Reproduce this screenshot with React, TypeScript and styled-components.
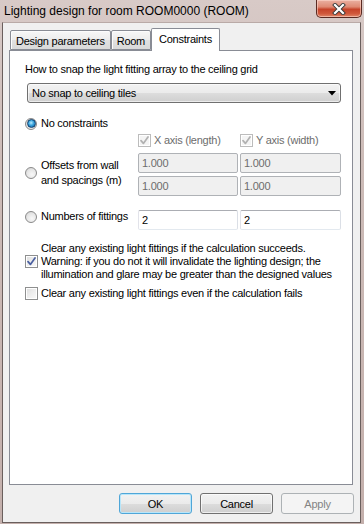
import React from "react";
import styled, { createGlobalStyle } from "styled-components";

const Global = createGlobalStyle`
  html, body { margin: 0; padding: 0; width: 364px; height: 524px; overflow: hidden; background: #c9b8b4; }
  #root { width: 364px; height: 524px; }
  * { box-sizing: border-box; }
`;

const UI_FONT = `"Liberation Sans", Arial, sans-serif`;

const Window = styled.div`
  width: 364px;
  height: 524px;
  display: flex;
  flex-direction: column;
  padding: 0 3px 1px 2px;
  background: linear-gradient(180deg, #d8cac7 0%, #cdbcb8 30%, #c4b0ac 100%);
  font-family: ${UI_FONT};
  font-size: 11px;
  letter-spacing: -0.25px;
  color: #000;
`;

const TitleBar = styled.div`
  height: 22px;
  flex: none;
  display: flex;
  align-items: flex-start;
`;

const Title = styled.div`
  padding: 4px 0 0 2px;
  font-size: 12px;
  letter-spacing: 0;
  line-height: 15px;
  color: #000;
`;

const CloseButton = styled.div`
  margin-left: auto;
  margin-right: -1px;
  width: 46px;
  height: 18px;
  border: 1px solid #5a2a22;
  border-top: none;
  border-radius: 0 0 5px 5px;
  background: linear-gradient(180deg, #eab0a2 0%, #df8a74 40%, #c6432a 55%, #d0583b 80%, #e0876a 100%);
  box-shadow: inset 0 0 0 1px rgba(255, 220, 210, 0.55);
  display: flex;
  align-items: center;
  justify-content: center;
`;

const Client = styled.div`
  flex: 1;
  display: flex;
  flex-direction: column;
  border: 1px solid #6a5f5d;
  border-top-color: #b9aaa7;
  background: #f0f0f0;
  padding: 5px 7px 8px 6px;
`;

const TabArea = styled.div`
  flex: 1;
  display: flex;
  flex-direction: column;
`;

const TabStrip = styled.div`
  height: 23px;
  display: flex;
  align-items: flex-end;
  padding-left: 1px;
  margin-bottom: -1px;
  position: relative;
  z-index: 1;
`;

const Tab = styled.div<{ $active?: boolean }>`
  display: flex;
  align-items: center;
  justify-content: center;
  border: 1px solid #898c95;
  border-bottom: ${(p) => (p.$active ? "none" : "1px solid #898c95")};
  border-radius: 2px 2px 0 0;
  height: ${(p) => (p.$active ? "23px" : "20px")};
  padding: ${(p) => (p.$active ? "0 7px 2px 7px" : "1px 5px 0 5px")};
  margin-bottom: ${(p) => (p.$active ? "0" : "1px")};
  background: ${(p) =>
    p.$active
      ? "#ffffff"
      : "linear-gradient(180deg, #f7f7f7 0%, #ececec 50%, #e1e1e1 51%, #d9d9d9 100%)"};
  box-shadow: ${(p) => (p.$active ? "none" : "inset 1px 1px 0 #fcfcfc")};
  white-space: nowrap;
`;

const Panel = styled.div`
  flex: 1;
  background: #ffffff;
  border: 1px solid #898c95;
  padding: 11px 10px 0 15px;
  display: flex;
  flex-direction: column;
`;

const TextLine = styled.div`
  line-height: 15px;
  white-space: nowrap;
`;

const Combo = styled.div`
  margin: 6px 1px 0 2px;
  height: 20px;
  border: 1px solid #707070;
  border-radius: 3px;
  background: linear-gradient(180deg, #f2f2f2 0%, #ebebeb 50%, #dddddd 51%, #cfcfcf 100%);
  box-shadow: inset 0 0 0 1px rgba(255, 255, 255, 0.6);
  display: flex;
  align-items: center;
  padding: 0 4px 0 4px;
`;

const ComboText = styled.span`
  flex: 1;
  white-space: nowrap;
`;

const Row = styled.div<{ $top: number; $align?: string }>`
  display: flex;
  align-items: ${(p) => p.$align ?? "center"};
  margin-top: ${(p) => p.$top}px;
`;

const LabelCell = styled.div<{ $offset?: number }>`
  width: 113px;
  flex: none;
  margin-top: ${(p) => p.$offset ?? 0}px;
`;

const Fields = styled.div`
  display: grid;
  grid-template-columns: 100px 101px;
  column-gap: 2px;
  row-gap: 3px;
  align-items: center;
`;

const OptionLabel = styled.label<{ $gap?: number; $disabled?: boolean }>`
  display: flex;
  align-items: center;
  gap: ${(p) => p.$gap ?? 4}px;
  color: ${(p) => (p.$disabled ? "#6d6d6d" : "#000")};
  line-height: 15px;
  white-space: nowrap;
`;

const MultiText = styled.span<{ $lh?: number }>`
  display: block;
  line-height: ${(p) => p.$lh ?? 15}px;
  white-space: nowrap;
`;

const RadioDot = styled.span<{ $checked?: boolean }>`
  width: 12px;
  height: 12px;
  flex: none;
  border-radius: 50%;
  border: 1px solid #8a8a8a;
  background: radial-gradient(circle at 60% 65%, #f8f8f8 0%, #e6e6e6 55%, #cdcdcd 100%);
  display: flex;
  align-items: center;
  justify-content: center;
  &::after {
    content: "";
    display: ${(p) => (p.$checked ? "block" : "none")};
    width: 7px;
    height: 7px;
    border-radius: 50%;
    border: 1px solid #10406e;
    background: radial-gradient(circle at 45% 40%, #b8ecff 0%, #39a3dd 45%, #0c5494 100%);
  }
`;

const CheckBox = styled.span<{ $disabled?: boolean }>`
  width: 13px;
  height: 13px;
  flex: none;
  border: 1px solid ${(p) => (p.$disabled ? "#bcbcbc" : "#8e8f8f")};
  background: ${(p) =>
    p.$disabled
      ? "#f4f4f4"
      : "linear-gradient(135deg, #dcdcdc 0%, #ececec 45%, #fafafa 100%)"};
  box-shadow: inset 0 0 0 1px #ffffff;
  display: flex;
  align-items: center;
  justify-content: center;
`;

const Input = styled.input<{ $disabled?: boolean }>`
  width: 100%;
  height: 20px;
  margin: 0;
  border: 1px solid #abadb3;
  border-color: #abadb3 #dbdfe6 #e3e9ef #e2e3ea;
  border-radius: 2px;
  padding: 0 3px;
  font-family: ${UI_FONT};
  font-size: 11px;
  letter-spacing: -0.25px;
  outline: none;
  background: ${(p) => (p.$disabled ? "#f0f0f0" : "#ffffff")};
  color: ${(p) => (p.$disabled ? "#6d6d6d" : "#000")};
  ${(p) => (p.$disabled ? "border-color: #afb2b6;" : "")}
`;

const ButtonRow = styled.div`
  margin-top: 8px;
  margin-right: -1px;
  display: flex;
  justify-content: flex-end;
  gap: 8px;
`;

const Button = styled.button<{ $default?: boolean }>`
  width: 73px;
  height: 21px;
  margin: 0;
  padding: 0;
  border: 1px solid ${(p) => (p.$default ? "#4fa6d8" : "#707070")};
  border-radius: 3px;
  background: linear-gradient(180deg, #f2f2f2 0%, #ebebeb 50%, #dddddd 51%, #cfcfcf 100%);
  box-shadow: inset 0 0 0 1px ${(p) => (p.$default ? "#b8e6fa" : "rgba(255,255,255,0.65)")};
  font-family: ${UI_FONT};
  font-size: 11px;
  letter-spacing: -0.25px;
  color: #000;
  &:disabled {
    border-color: #adb2b5;
    background: #f4f4f4;
    box-shadow: none;
    color: #838383;
  }
`;

const Check = ({ disabled }: { disabled?: boolean }) => (
  <svg width="9" height="9" viewBox="0 0 9 9">
    <path
      d="M1 4.6 L3.4 7.4 L8 1"
      fill="none"
      stroke={disabled ? "#b1b1b1" : "#4a5fa0"}
      strokeWidth="1.7"
      strokeLinecap="round"
      strokeLinejoin="round"
    />
  </svg>
);

export default function App() {
  return (
    <>
      <Global />
      <Window>
        <TitleBar>
          <Title>Lighting design for room ROOM0000 (ROOM)</Title>
          <CloseButton>
            <svg width="14" height="12" viewBox="0 0 14 12">
              <path d="M3 2 L11 10 M11 2 L3 10" stroke="#3a3a3a" strokeWidth="4" strokeLinecap="square" />
              <path d="M3 2 L11 10 M11 2 L3 10" stroke="#ffffff" strokeWidth="2.2" strokeLinecap="square" />
            </svg>
          </CloseButton>
        </TitleBar>
        <Client>
          <TabArea>
            <TabStrip>
              <Tab>Design parameters</Tab>
              <Tab>Room</Tab>
              <Tab $active>Constraints</Tab>
            </TabStrip>
            <Panel>
              <TextLine>How to snap the light fitting array to the ceiling grid</TextLine>
              <Combo>
                <ComboText>No snap to ceiling tiles</ComboText>
                <svg width="8" height="5" viewBox="0 0 8 5">
                  <path d="M0 0 L8 0 L4 4.5 Z" fill="#000" />
                </svg>
              </Combo>

              <Row $top={13}>
                <OptionLabel>
                  <RadioDot $checked />
                  <span>No constraints</span>
                </OptionLabel>
              </Row>

              <Row $top={2}>
                <LabelCell />
                <Fields>
                  <OptionLabel $gap={3} $disabled>
                    <CheckBox $disabled>
                      <Check disabled />
                    </CheckBox>
                    <span>X axis (length)</span>
                  </OptionLabel>
                  <OptionLabel $gap={3} $disabled>
                    <CheckBox $disabled>
                      <Check disabled />
                    </CheckBox>
                    <span>Y axis (width)</span>
                  </OptionLabel>
                </Fields>
              </Row>

              <Row $top={5} $align="flex-start">
                <LabelCell $offset={5}>
                  <OptionLabel>
                    <RadioDot />
                    <MultiText>
                      Offsets from wall
                      <br />
                      and spacings (m)
                    </MultiText>
                  </OptionLabel>
                </LabelCell>
                <Fields>
                  <Input $disabled disabled readOnly value="1.000" />
                  <Input $disabled disabled readOnly value="1.000" />
                  <Input $disabled disabled readOnly value="1.000" />
                  <Input $disabled disabled readOnly value="1.000" />
                </Fields>
              </Row>

              <Row $top={14} $align="flex-start">
                <LabelCell $offset={-1}>
                  <OptionLabel>
                    <RadioDot />
                    <span>Numbers of fittings</span>
                  </OptionLabel>
                </LabelCell>
                <Fields>
                  <Input readOnly value="2" />
                  <Input readOnly value="2" />
                </Fields>
              </Row>

              <Row $top={12}>
                <OptionLabel $gap={3}>
                  <CheckBox>
                    <Check />
                  </CheckBox>
                  <MultiText $lh={13}>
                    Clear any existing light fittings if the calculation succeeds.
                    <br />
                    Warning: if you do not it will invalidate the lighting design; the
                    <br />
                    illumination and glare may be greater than the designed values
                  </MultiText>
                </OptionLabel>
              </Row>

              <Row $top={5}>
                <OptionLabel $gap={3}>
                  <CheckBox />
                  <span>Clear any existing light fittings even if the calculation fails</span>
                </OptionLabel>
              </Row>
            </Panel>
          </TabArea>
          <ButtonRow>
            <Button $default>OK</Button>
            <Button>Cancel</Button>
            <Button disabled>Apply</Button>
          </ButtonRow>
        </Client>
      </Window>
    </>
  );
}
